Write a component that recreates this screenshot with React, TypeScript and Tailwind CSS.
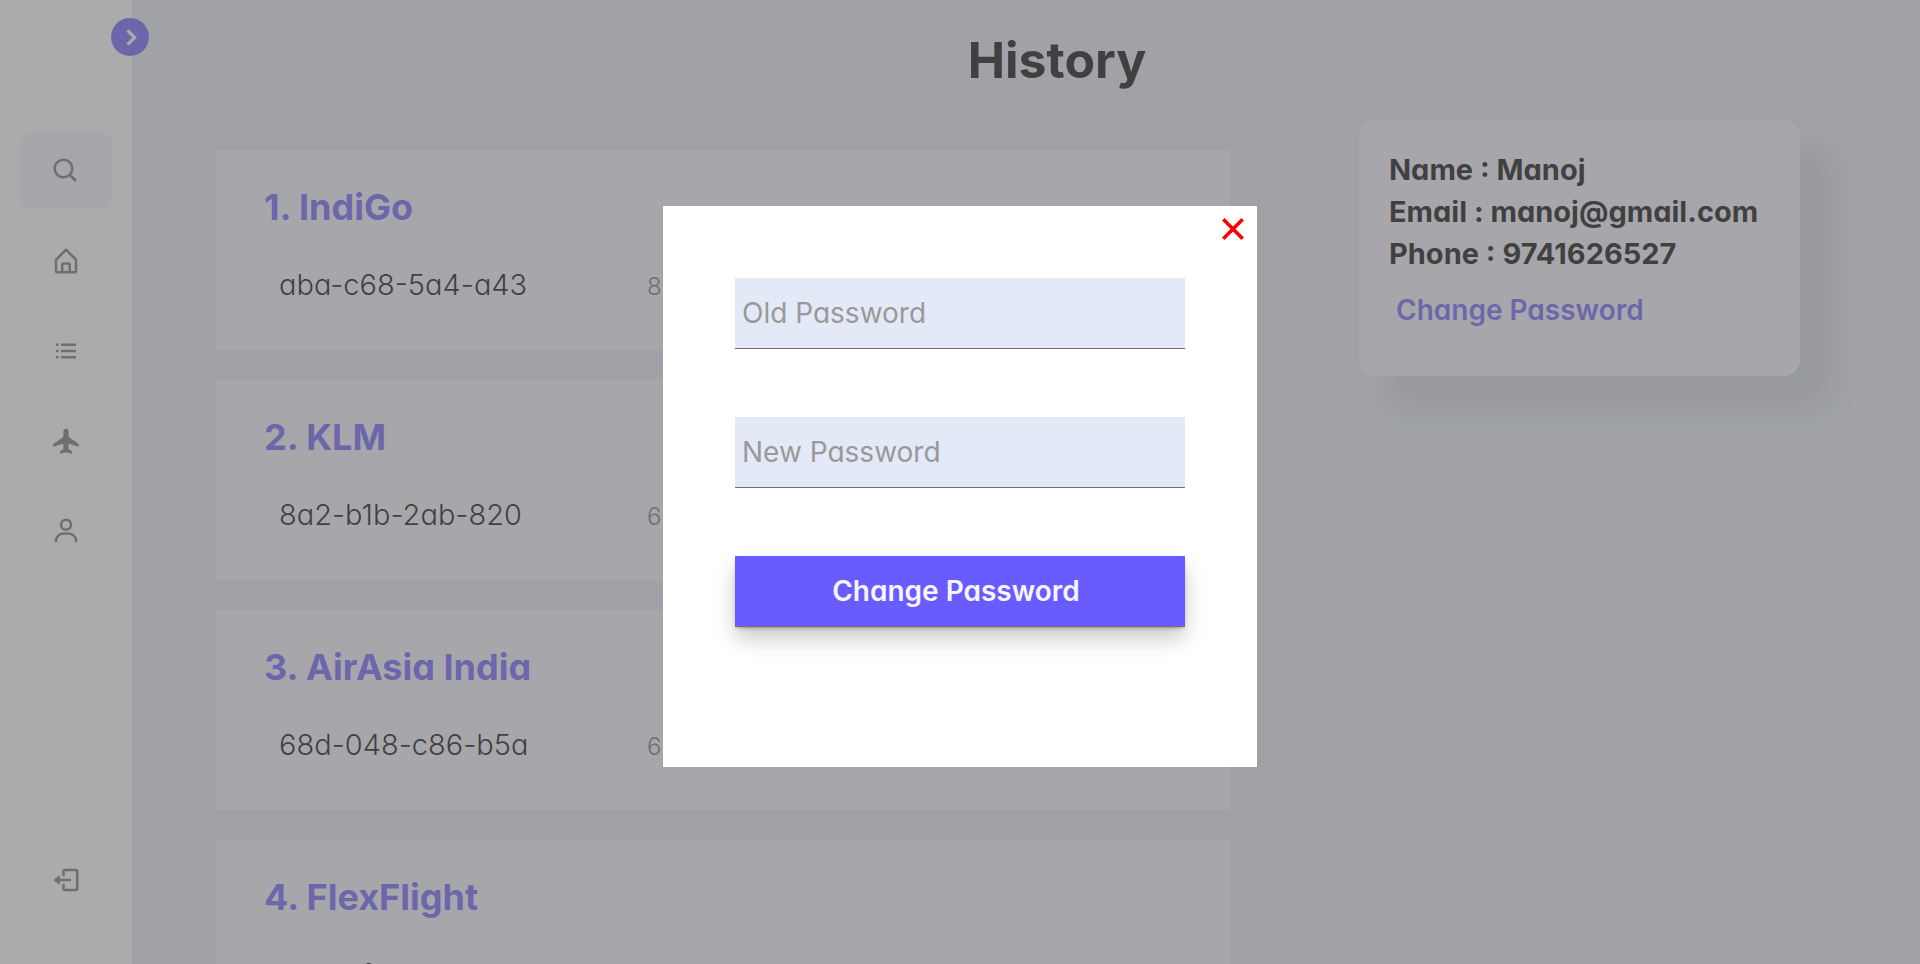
import { useState } from "react";
import { BiChevronRight, BiHomeAlt, BiListUl, BiLogOut, BiSearch, BiUser } from "react-icons/bi";

function PlaneIcon({ size }: { size: number }) {
  return (
    <svg width={size} height={size} viewBox="0 0 24 24" fill="currentColor">
      <path d="M12 2.2c-1.2 0-2.1.9-2.1 2.1v4.5L2.4 14c-.4.3-.6.7-.6 1.2v1.3l8.1-2.4v4.3l-2.3 1.5c-.3.2-.4.5-.4.8v1.5L12 20.9l4.8 1.3v-1.5c0-.3-.1-.6-.4-.8l-2.3-1.5v-4.3l8.1 2.4v-1.3c0-.5-.2-.9-.6-1.2l-7.5-5.2V4.300c0-1.200-.9-2.100-2.100-2.100z" />
    </svg>
  );
}

const navItems = [
  { label: "Search", Icon: BiSearch, active: true },
  { label: "Home", Icon: BiHomeAlt, active: false },
  { label: "List", Icon: BiListUl, active: false },
  { label: "Flights", Icon: PlaneIcon, active: false },
  { label: "Profile", Icon: BiUser, active: false },
];

const bookings = [
  { airline: "IndiGo", code: "aba-c68-5a4-a43", price: "8" },
  { airline: "KLM", code: "8a2-b1b-2ab-820", price: "6" },
  { airline: "AirAsia India", code: "68d-048-c86-b5a", price: "67" },
  { airline: "FlexFlight", code: "3ae-5f2-9c0-a7e", price: "6" },
];

function Sidebar() {
  return (
    <aside className="relative flex w-33 shrink-0 flex-col justify-between bg-white px-[21px] pt-[133px] pb-[47px] text-[#707070]">
      <button
        type="button"
        aria-label="Expand menu"
        className="absolute top-[18px] -right-[17px] flex size-[38px] items-center justify-center rounded-full bg-[#695cff] text-white"
      >
        <BiChevronRight size={33} className="stroke-current stroke-[0.5]" />
      </button>
      <nav className="flex flex-col gap-[15px]">
        {navItems.map(({ label, Icon, active }) => (
          <a
            key={label}
            href="#"
            aria-label={label}
            className={
              active
                ? "flex h-[75px] items-center justify-center rounded-lg bg-[#f6f5ff]"
                : "flex h-[75px] items-center justify-center rounded-lg"
            }
          >
            <Icon size={30} />
          </a>
        ))}
      </nav>
      <a href="#" aria-label="Log out" className="flex h-[75px] items-center justify-center">
        <BiLogOut size={30} />
      </a>
    </aside>
  );
}

function BookingCard({ index, airline, code, price }: { index: number; airline: string; code: string; price: string }) {
  return (
    <li className="h-[200px] shrink-0 bg-[#f6f5ff] px-12 pt-8">
      <h2 className="text-4xl/[50px] font-bold text-[#695cff]">
        {index}. {airline}
      </h2>
      <div className="mt-7 grid grid-cols-[368px_1fr] items-baseline pl-[15px]">
        <span className="text-[29px]/[50px] font-light">{code}</span>
        <span className="text-2xl/[50px] font-light text-[#707070]">{price}</span>
      </div>
    </li>
  );
}

function ProfileCard({ onChangePassword }: { onChangePassword: () => void }) {
  return (
    <section className="h-64 w-[441px] shrink-0 rounded-2xl bg-[#f6f5ff] px-[30px] pt-[29px] shadow-[30px_30px_30px_rgba(0,0,0,0.1)]">
      <div className="text-[29px]/[42px] font-bold whitespace-nowrap">
        <p>Name : Manoj</p>
        <p>Email : manoj@gmail.com</p>
        <p>Phone : 9741626527</p>
      </div>
      <button
        type="button"
        onClick={onChangePassword}
        className="mt-[14px] px-[7px] text-[28px]/[42px] font-semibold text-[#695cff]"
      >
        Change Password
      </button>
    </section>
  );
}

function PasswordDialog({ onClose }: { onClose: () => void }) {
  const field =
    "h-[71px] w-full border-b border-[#707070] bg-[#e4e9f7] px-[7px] text-[28px] text-black outline-none placeholder:text-[#999999]";
  return (
    <div className="fixed inset-0 flex items-center justify-center bg-[rgba(110,110,110,0.58)] pt-2">
      <div role="dialog" aria-label="Change Password" className="relative w-[594px] bg-white px-[72px] pt-18 pb-[140px]">
        <button
          type="button"
          aria-label="Close"
          onClick={onClose}
          className="absolute top-[7px] right-2 flex size-8 items-center justify-center text-[#ff0000]"
        >
          <svg width="22" height="22" viewBox="0 0 22 22" fill="none" stroke="currentColor" strokeWidth="3.6">
            <path d="M1.300 1.300 20.700 20.700M20.700 1.300 1.300 20.700" />
          </svg>
        </button>
        <form className="flex flex-col gap-[68px]" onSubmit={(e) => e.preventDefault()}>
          <input type="password" aria-label="Old Password" placeholder="Old Password" className={field} />
          <input type="password" aria-label="New Password" placeholder="New Password" className={field} />
          <button
            type="submit"
            className="h-[71px] border-b border-[#707070] bg-[#695cff] pr-2 text-[28px] font-semibold text-[#f6f5ff] shadow-[0_2px_4px_-2px_rgba(0,0,0,0.5),0_12px_20px_rgba(0,0,0,0.2)]"
          >
            Change Password
          </button>
        </form>
      </div>
    </div>
  );
}

export default function App() {
  const [open, setOpen] = useState(true);
  return (
    <div className="flex h-screen overflow-hidden bg-[#e4e9f7] font-['Inter',sans-serif] text-black [font-feature-settings:'cv11']">
      <Sidebar />
      <main className="flex min-w-0 flex-1 flex-col">
        <h1 className="flex h-30 shrink-0 items-center justify-center pl-[62px] text-[50px]/[118px] font-bold">History</h1>
        <div className="flex items-start gap-[129px] pr-30 pl-21">
          <ol className="mt-[30px] flex min-w-0 flex-1 flex-col gap-[30px]">
            {bookings.map((booking, i) => (
              <BookingCard key={booking.code} index={i + 1} {...booking} />
            ))}
          </ol>
          <ProfileCard onChangePassword={() => setOpen(true)} />
        </div>
      </main>
      {open && <PasswordDialog onClose={() => setOpen(false)} />}
    </div>
  );
}
